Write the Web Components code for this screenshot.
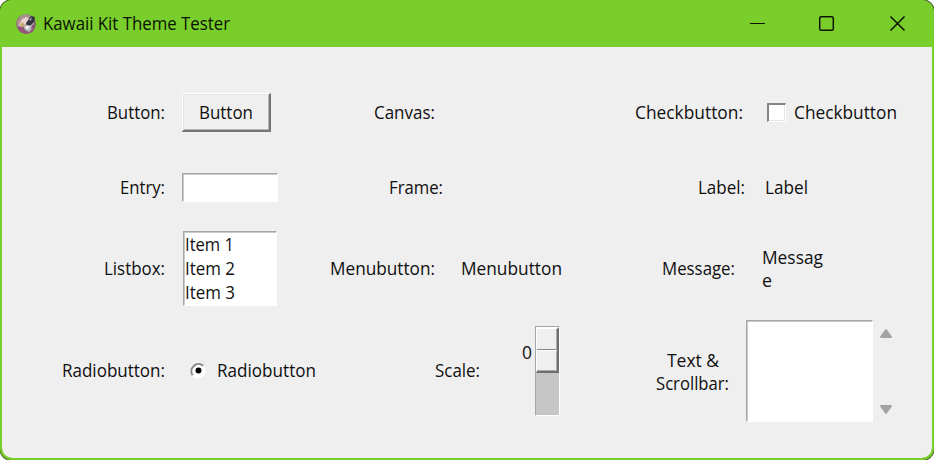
<!DOCTYPE html>
<html lang="en"><head><meta charset="utf-8"><title>Kawaii Kit Theme Tester</title>
<style>
html,body{margin:0;background:#fff;overflow:hidden}
body{font:18px/23px "Open Sans","Noto Sans",sans-serif;color:#101010}
tk-window{width:934px;height:460px}
</style></head><body>
<tk-window>
<tk-text slot="title" w="187" style="color:#0b1403">Kawaii Kit Theme Tester</tk-text>
<tk-cell style="--pad:105px;--gap:17px"><tk-text w="58">Button:</tk-text><tk-button><tk-text w="54">Button</tk-text></tk-button></tk-cell>
<tk-cell style="--pad:54px"><tk-text w="61">Canvas:</tk-text></tk-cell>
<tk-cell style="--pad:15px;--gap:24px"><tk-text w="108">Checkbutton:</tk-text><tk-check><tk-text w="103">Checkbutton</tk-text></tk-check></tk-cell>
<tk-cell style="--pad:118px;--gap:17px"><tk-text w="45">Entry:</tk-text><tk-field style="width:96px;height:29px"></tk-field></tk-cell>
<tk-cell style="--pad:69px"><tk-text w="54">Frame:</tk-text></tk-cell>
<tk-cell style="--pad:78px;--gap:20px"><tk-text w="47">Label:</tk-text><tk-text w="43">Label</tk-text></tk-cell>
<tk-cell style="--pad:102px;--gap:18px"><tk-text w="61">Listbox:</tk-text><tk-field style="width:94px;height:75px"><tk-text w="49">Item 1</tk-text><tk-text w="50">Item 2</tk-text><tk-text w="50">Item 3</tk-text></tk-field></tk-cell>
<tk-cell style="--pad:10px;--gap:26px"><tk-text w="105">Menubutton:</tk-text><tk-text w="101">Menubutton</tk-text></tk-cell>
<tk-cell style="--pad:42px;--gap:27px"><tk-text w="73">Message:</tk-text><tk-stack style="padding-top:1px"><tk-text w="61">Messag</tk-text><tk-text w="10">e</tk-text></tk-stack></tk-cell>
<tk-cell style="--pad:60px;--gap:24px"><tk-text w="103" style="margin-bottom:1px">Radiobutton:</tk-text><tk-radio><tk-text w="99">Radiobutton</tk-text></tk-radio></tk-cell>
<tk-cell style="--pad:115px;--gap:42px"><tk-text w="45" style="margin-bottom:1px">Scale:</tk-text><tk-scale><tk-text w="10">0</tk-text></tk-scale></tk-cell>
<tk-cell style="--pad:36px;--gap:17px"><tk-stack style="align-items:center;padding-top:1px"><tk-text w="52">Text &amp;</tk-text><tk-text w="73">Scrollbar:</tk-text></tk-stack><tk-field style="width:127px;height:102px"></tk-field><tk-scrollbar></tk-scrollbar></tk-cell>
</tk-window>
<script>
function define(name, html, ready) {
  customElements.define(name, class extends HTMLElement {
    constructor() { super(); this.attachShadow({mode: 'open'}).innerHTML = html; }
    connectedCallback() { if (ready) ready(this); }
  });
}
// Text condensed to the advance width given in "w".
define('tk-text', `<style>:host{display:block;flex:none;white-space:nowrap;text-align:left}span{display:inline-block;transform-origin:0 50%}</style><span><slot></slot></span>`, el => {
  const span = el.shadowRoot.querySelector('span'), w = +el.getAttribute('w');
  el.style.width = w + 'px';
  const fit = () => { span.style.transform = 'none'; span.style.transform = `scaleX(${w / span.getBoundingClientRect().width})`; };
  fit(); document.fonts.ready.then(fit);
});
define('tk-window', `<style>
:host{display:flex;flex-direction:column;box-sizing:border-box;background:#79ce2b;border:solid #79ce2b;border-width:0 2px 2px;border-radius:12px;overflow:hidden;box-shadow:0 0 0 1px #47632f}
header{height:47px;flex:none;display:flex;align-items:center;padding-left:13px}
header>svg{flex:none}.name{margin-left:6px;flex:1}.ctl{margin-right:25px}
main{flex:1;background:#efefef;border-radius:0 0 10px 10px;display:grid;grid-template-columns:318px 300px 1fr;grid-template-rows:75px 75px 87px 118px;padding-top:28px}
main{box-sizing:border-box}
</style><header><svg width="22" height="22" viewBox="0 0 22 22">
<circle cx="11" cy="11" r="9.8" fill="#7a5f70"/><path d="M2 9 5 3l6-2 5 2-3 4-4 1-3 5-4 2z" fill="#a8938f"/><path d="m4 12 3-6 5-2 3 3-5 5-4 2z" fill="#e7d4cd"/><path d="m2.500 13 4 1 4 5 5-1 4-4-2 5-6 2-6-2z" fill="#a0507a"/><path d="m8 13 6-5 5 1-1 6-4 4-4-2z" fill="#b9b6bd"/><path d="m11 10 5-7 4 1-1 5-3 3-4 1z" fill="#34333f"/><path d="m14 7 3-3-1 4z" fill="#a3a3ad"/><path d="m2 8 3-2-2 5z" fill="#d477a1"/><path d="m7 9 3 3-2 2-3-2z" fill="#c9a66d"/><path d="m10 14 3-2 2 2-3 3z" fill="#f0eeee"/><path d="m17 12 3-1-1 4-3 1z" fill="#8d5576"/></svg>
<div class="name"><slot name="title"></slot></div>
<svg class="ctl" width="160" height="20" viewBox="0 0 160 20" fill="none" stroke="#0b1403" stroke-width="1.5"><path d="M3 9.500h15" stroke-width="1"/><rect x="72.700" y="2.700" width="13.600" height="13.600" rx="1.500"/><path d="m143.500 2.500 14 14m0-14-14 14"/></svg></header><main><slot></slot></main>`);
define('tk-cell', `<style>:host{display:flex;align-items:center;gap:var(--gap,0);padding-left:var(--pad,0)}</style><slot></slot>`);
define('tk-stack', `<style>:host{display:flex;flex-direction:column;flex:none}</style><slot></slot>`);
define('tk-button', `<style>:host{box-sizing:border-box;width:89px;height:39px;display:flex;align-items:center;justify-content:center;border:solid;border-width:1px 2px 2px 1px;border-color:#fff #747474 #747474 #fff;box-shadow:inset 1px 1px #e3e3e3,inset -1px -1px #b5b5b5}</style><slot></slot>`);
define('tk-field', `<style>:host{box-sizing:border-box;display:block;flex:none;background:#fff;line-height:24px;border:1px solid;border-color:#a6a6a6 #fff #fff #a6a6a6;box-shadow:inset 1px 1px #c9c9c9;padding-left:1px}</style><slot></slot>`);
define('tk-check', `<style>:host{display:flex;align-items:center;gap:8px}i{box-sizing:border-box;width:19px;height:19px;background:#fff;border:solid;border-width:2px 1px 1px 2px;border-color:#858585 #fff #fff #858585;box-shadow:inset -1px -1px #e5e5e5}</style><i></i><slot></slot>`);
define('tk-radio', `<style>:host{display:flex;align-items:center;gap:10px;margin-bottom:1px}svg{display:block}</style><svg width="18" height="18" viewBox="0 0 18 18"><circle cx="9" cy="9" r="7.5" fill="#fff"/><path d="M3.600 13.200A7.200 7.200 0 0 1 14.200 3.700" fill="none" stroke="#888" stroke-width="2"/><circle cx="9.500" cy="8.600" r="3" fill="#000"/></svg><slot></slot>`);
define('tk-scale', `<style>:host{display:flex;align-items:flex-start;gap:3px}slot{display:block;padding-top:15px}
.trough{box-sizing:border-box;width:25px;height:90px;background:#c6c6c6;border:1px solid #a6a6a6;border-right-color:#fff;border-bottom-color:#fff}
.thumb{box-sizing:border-box;height:46px;background:#efefef;border:solid;border-width:2px 2px 2px 1px;border-color:#fff #6f6f6f #6f6f6f #fff;box-shadow:inset -1px -1px #aaa;display:grid;grid-template-rows:1fr 1fr}
.thumb i:first-child{border-bottom:1px solid #858585}.thumb i:last-child{border-top:1px solid #fff}</style><slot></slot><div class="trough"><div class="thumb"><i></i><i></i></div></div>`);
define('tk-scrollbar', `<style>:host{display:flex;flex-direction:column;justify-content:space-between;height:87px;margin-left:-11px}svg{display:block}</style><svg width="14" height="11" viewBox="0 0 14 11"><path d="m7 2 5 7H2z" fill="#a3a3a3" stroke="#a3a3a3" stroke-width="2" stroke-linejoin="round"/></svg><svg width="14" height="11" viewBox="0 0 14 11"><path d="m7 9 5-7H2z" fill="#a3a3a3" stroke="#a3a3a3" stroke-width="2" stroke-linejoin="round"/></svg>`);
</script></body></html>
